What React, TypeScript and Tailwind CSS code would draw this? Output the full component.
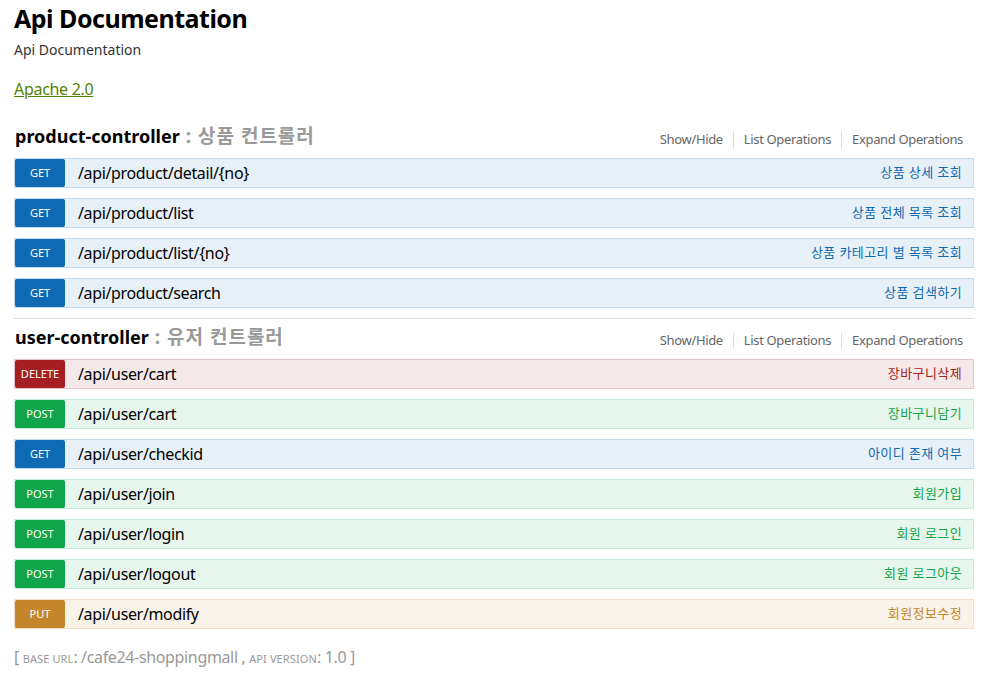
import React from 'react';

type Method = 'GET' | 'POST' | 'DELETE' | 'PUT';

interface Op {
  method: Method;
  path: string;
  summary: string;
}

const styles: Record<Method, { row: string; badge: string; text: string }> = {
  GET: { row: 'bg-[#e7f0f7] border-[#c3d9ec]', badge: 'bg-[#0f6ab4]', text: 'text-[#0f6ab4]' },
  POST: { row: 'bg-[#e7f6ec] border-[#c3e8d1]', badge: 'bg-[#10a54a]', text: 'text-[#10a54a]' },
  DELETE: { row: 'bg-[#f5e8e8] border-[#e8c6c7]', badge: 'bg-[#a41e22]', text: 'text-[#a41e22]' },
  PUT: { row: 'bg-[#f9f2e9] border-[#f0e0ca]', badge: 'bg-[#c5862b]', text: 'text-[#c5862b]' },
};

const product: Op[] = [
  { method: 'GET', path: '/api/product/detail/{no}', summary: '상품 상세 조회' },
  { method: 'GET', path: '/api/product/list', summary: '상품 전체 목록 조회' },
  { method: 'GET', path: '/api/product/list/{no}', summary: '상품 카테고리 별 목록 조회' },
  { method: 'GET', path: '/api/product/search', summary: '상품 검색하기' },
];

const user: Op[] = [
  { method: 'DELETE', path: '/api/user/cart', summary: '장바구니삭제' },
  { method: 'POST', path: '/api/user/cart', summary: '장바구니담기' },
  { method: 'GET', path: '/api/user/checkid', summary: '아이디 존재 여부' },
  { method: 'POST', path: '/api/user/join', summary: '회원가입' },
  { method: 'POST', path: '/api/user/login', summary: '회원 로그인' },
  { method: 'POST', path: '/api/user/logout', summary: '회원 로그아웃' },
  { method: 'PUT', path: '/api/user/modify', summary: '회원정보수정' },
];

const OpRow: React.FC<{ op: Op }> = ({ op }) => {
  const s = styles[op.method];
  return (
    <div className={`flex items-center h-[30px] border ${s.row}`}>
      <div className={`w-[50px] h-[28px] shrink-0 rounded-[2px] flex items-center justify-center text-white text-[11px] ${s.badge}`}>
        {op.method}
      </div>
      <div className="pl-[13px] text-[16px] tracking-[-0.35px] text-black flex-1">{op.path}</div>
      <div className={`pr-[11px] text-[13px] tracking-[0.4px] ${s.text}`}>{op.summary}</div>
    </div>
  );
};

const Resource: React.FC<{ name: string; desc: string; ops: Op[]; last?: boolean; className?: string }> = ({ name, desc, ops, last, className }) => (
  <div className={`${last ? '' : 'border-b border-[#dddddd] pb-[10px]'} ${className ?? ''}`}>
    <div className="flex items-center h-[24px] pl-[1px]">
      <div className="flex-1 text-[18px] leading-[24px]">
        <span className="font-bold text-black">{name}</span>
        <span className="font-bold text-[19px] text-[#999999] tracking-[1px]"> : {desc}</span>
      </div>
      <div className="flex items-center text-[13px] tracking-[-0.35px] text-[#666666] pr-[11px] pt-[8px]">
        <span>Show/Hide</span>
        <span className="mx-[10px] h-[16px] border-l border-[#dddddd]" />
        <span>List Operations</span>
        <span className="mx-[10px] h-[16px] border-l border-[#dddddd]" />
        <span>Expand Operations</span>
      </div>
    </div>
    <div className="flex flex-col gap-[10px] mt-[10px]">
      {ops.map((op, i) => (
        <OpRow key={i} op={op} />
      ))}
    </div>
  </div>
);

export default function App() {
  return (
    <div className="w-[990px] min-h-[682px] bg-white px-[14px] pr-[16px] pt-[3px] font-['Noto_Sans','Noto_Sans_CJK_KR',sans-serif]">
      <h1 className="text-[25px] leading-[30px] font-bold tracking-[-0.5px] text-black">Api Documentation</h1>
      <div className="mt-[7px] text-[14px] leading-[20px] text-[#333333]">Api Documentation</div>
      <div className="mt-[19px] text-[16px] leading-[20px] tracking-[-0.3px]">
        <a className="text-[#547f00] underline">Apache 2.0</a>
      </div>
      <Resource className="mt-[25px]" name="product-controller" desc="상품 컨트롤러" ops={product} />
      <Resource className="mt-[6px]" name="user-controller" desc="유저 컨트롤러" ops={user} last />
      <div className="mt-[18px] text-[16px] leading-[20px] tracking-[-0.35px] text-[#999999]">
        [ <span className="text-[11px] uppercase tracking-[0.1px]">base url</span>: /cafe24-shoppingmall , <span className="text-[11px] uppercase tracking-[0.1px]">api version</span>: 1.0 ]
      </div>
    </div>
  );
}
